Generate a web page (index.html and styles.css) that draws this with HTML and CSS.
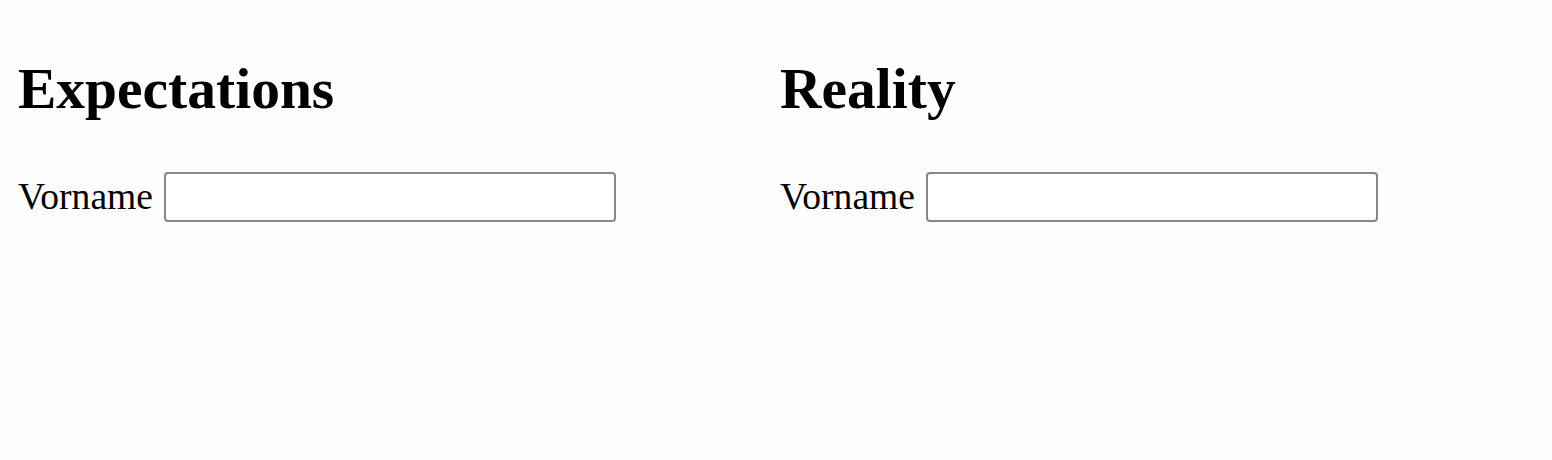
FILE: index.html
```html
<!DOCTYPE html>
<html lang="de">
<head>
<meta charset="utf-8">
<title>Expectations vs Reality</title>
<link rel="stylesheet" href="styles.css">
</head>
<body>
<main class="compare">
  <section class="col">
    <h1 class="title">Expectations</h1>
    <label class="field"><span class="label">Vorname</span><input class="input" type="text"></label>
  </section>
  <section class="col">
    <h1 class="title">Reality</h1>
    <label class="field"><span class="label">Vorname</span><input class="input" type="text"></label>
  </section>
</main>
</body>
</html>
```

FILE: styles.css
```css
html, body {
  margin: 0;
  background: #fefefe;
  color: #000;
  font-family: "Liberation Serif", "Times New Roman", serif;
}
.compare {
  display: flex;
  padding-left: 18px;
}
.col {
  width: 762px;
}
.title {
  margin: 56px 0 0;
  font-size: 57.5px;
  font-weight: 700;
  line-height: 65px;
}
.field {
  display: flex;
  align-items: center;
  gap: 11px;
  margin-top: 51px;
}
.label {
  font-size: 37.6px;
  line-height: 42px;
}
.input {
  box-sizing: border-box;
  width: 452px;
  height: 50px;
  margin: 0;
  border: 2px solid #868694;
  border-radius: 4px;
  background: #fff;
  font: inherit;
}
```
